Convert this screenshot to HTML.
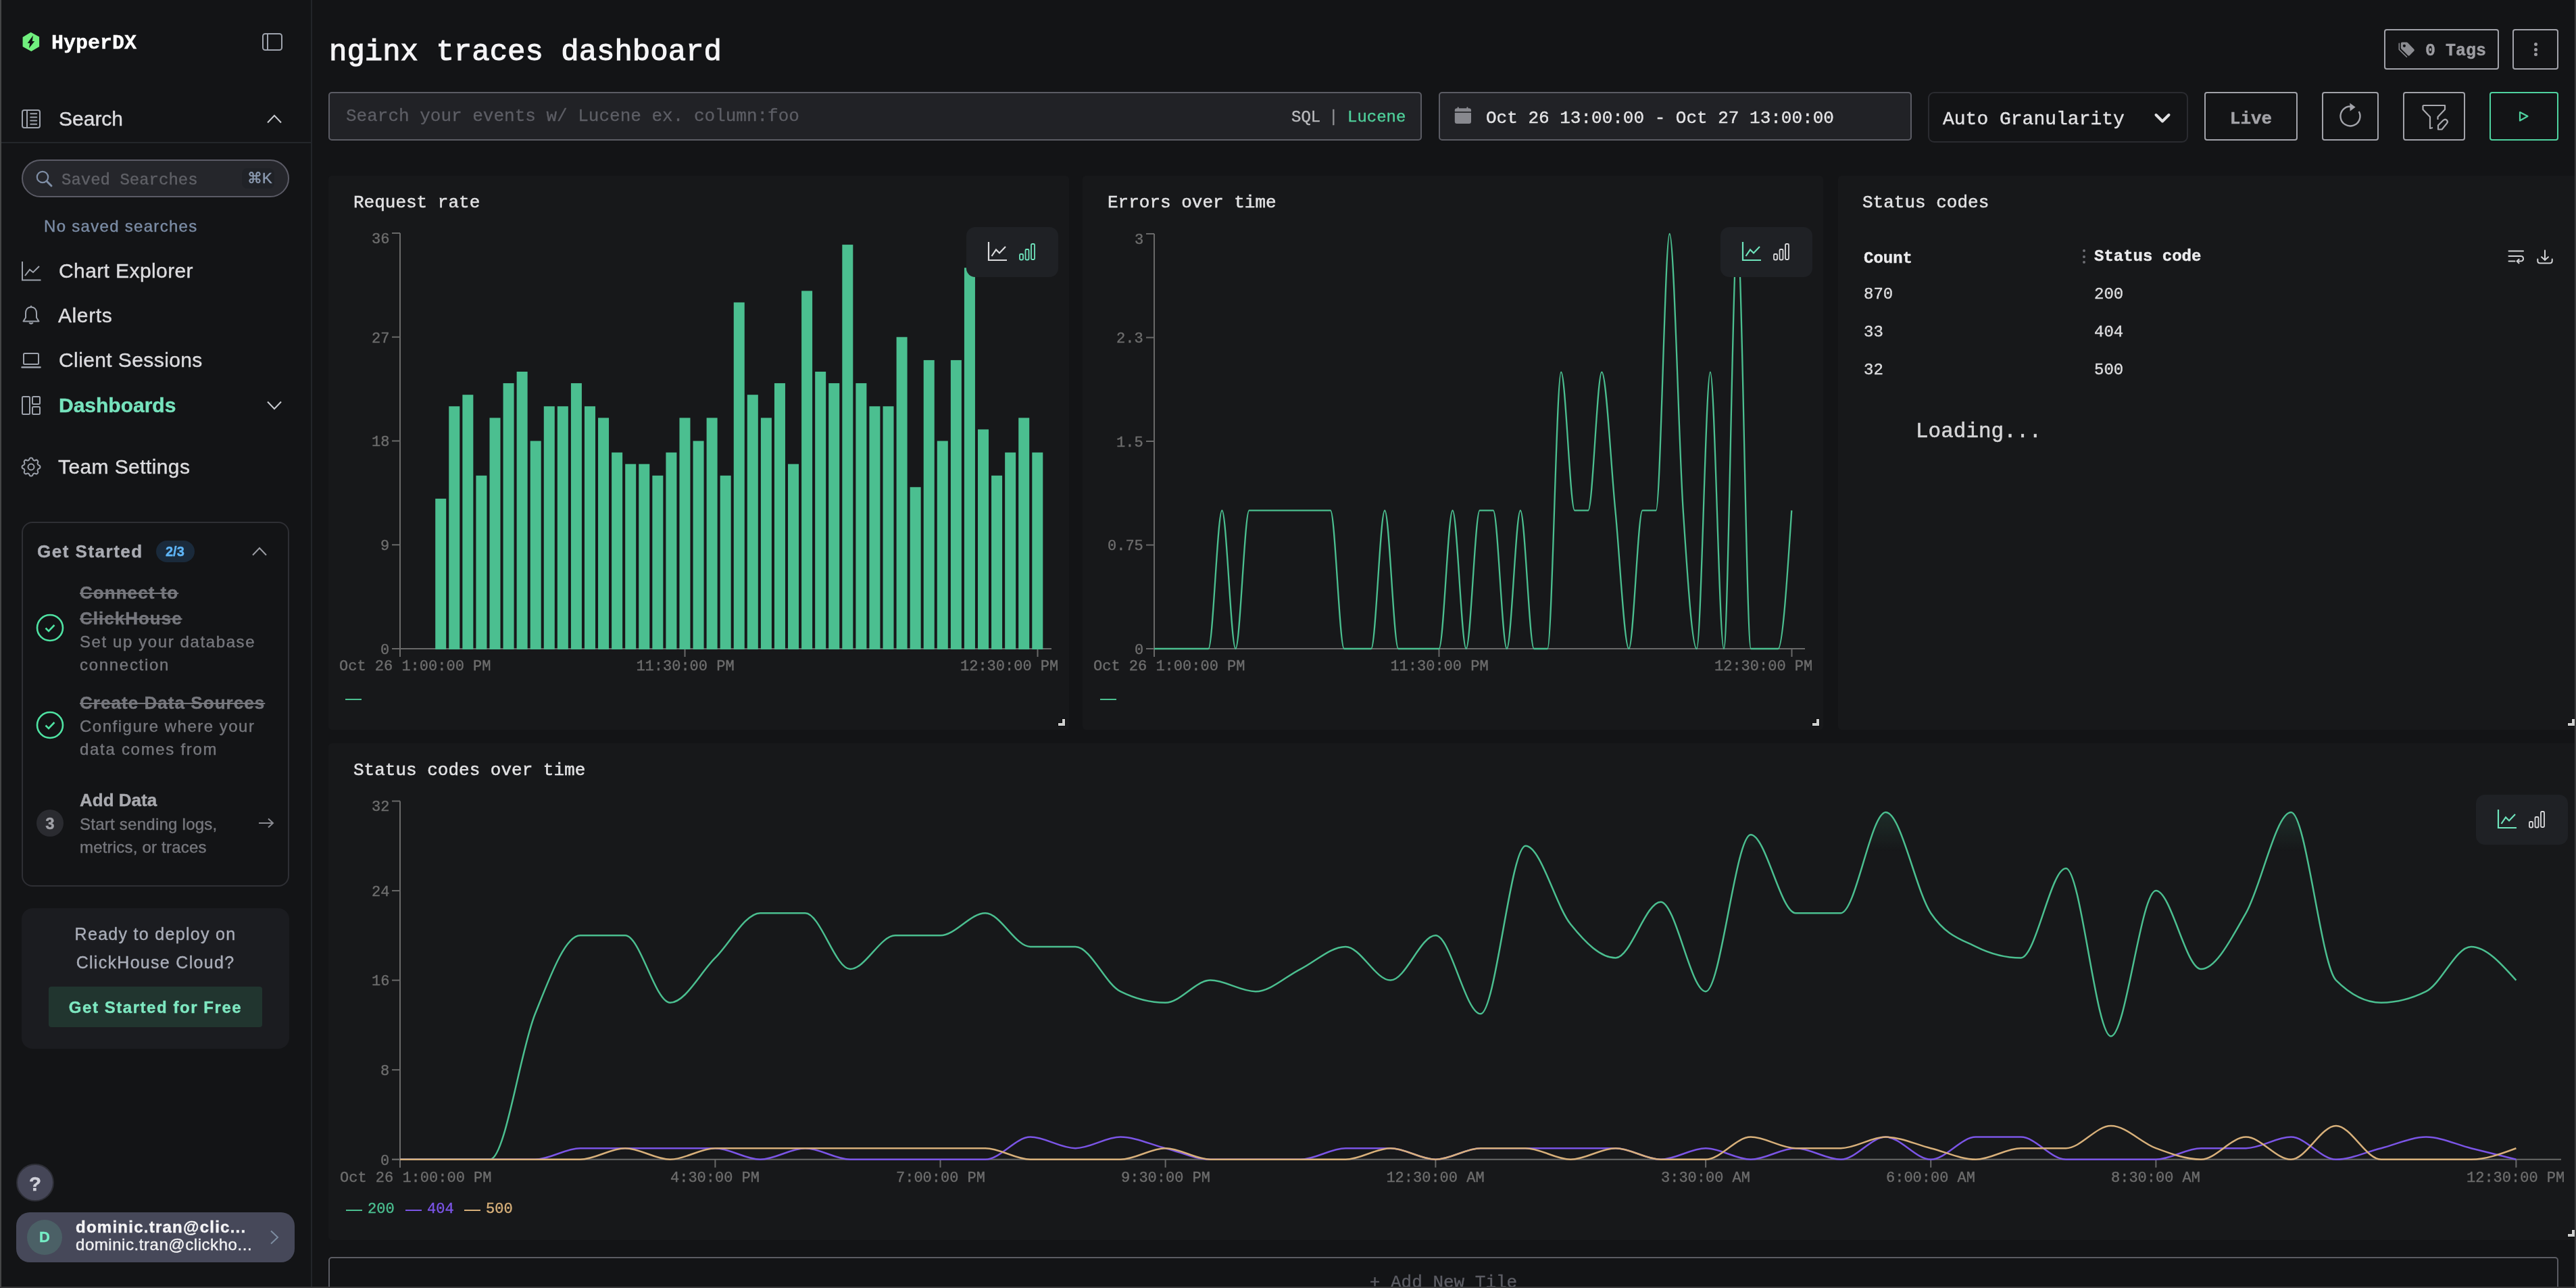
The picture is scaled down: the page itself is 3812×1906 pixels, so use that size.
<!DOCTYPE html><html><head><meta charset="utf-8"><title>nginx traces dashboard</title>
<style>
html,body{margin:0;padding:0;}
body{width:3812px;height:1906px;position:relative;overflow:hidden;background:#131416;}
.t{position:absolute;white-space:nowrap;will-change:transform;-webkit-text-stroke:0.4px;}
.a{position:absolute;box-sizing:border-box;}
svg{position:absolute;overflow:visible;}
</style></head><body>

<svg style="left:33px;top:47px" width="26" height="30" viewBox="0 0 26 30">
<path d="M12.6 0.8 L25.1 7.6 L25.1 22.1 L13.3 29.1 L0.6 22.1 L0.6 7.9 Z" fill="#70ef7e"/>
<path d="M15.9 5.6 L7.7 16.7 L11.1 16.9 L10.0 24.2 L18.2 14.1 L14.8 13.9 Z" fill="#111214"/>
</svg>
<div class="t" style="left:76px;top:49.0px;font:bold 30px/30px 'Liberation Mono', monospace;color:#ffffff;">HyperDX</div>
<svg style="left:388px;top:49px" width="30" height="26" viewBox="0 0 30 26">
<rect x="1" y="1" width="28" height="24" rx="3.5" fill="none" stroke="#9ea3ad" stroke-width="2"/>
<line x1="8" y1="1" x2="8" y2="25" stroke="#9ea3ad" stroke-width="2"/></svg>
<svg style="left:32px;top:162px" width="28" height="28" viewBox="0 0 28 28">
<rect x="1" y="1" width="26" height="26" rx="3" fill="none" stroke="#9ea3ad" stroke-width="2"/>
<line x1="8" y1="1" x2="8" y2="27" stroke="#9ea3ad" stroke-width="2"/>
<g stroke="#9ea3ad" stroke-width="2" stroke-linecap="round"><line x1="13.2" y1="6.2" x2="22.2" y2="6.2"/><line x1="13.2" y1="11.4" x2="22.2" y2="11.4"/><line x1="13.2" y1="16.6" x2="22.2" y2="16.6"/><line x1="13.2" y1="21.8" x2="22.2" y2="21.8"/></g></svg>
<div class="t" style="left:87px;top:161.1px;font:normal 30px/30px 'Liberation Sans', sans-serif;color:#dcdcdf;">Search</div>
<svg style="left:395px;top:169px" width="22" height="14" viewBox="0 0 22 14"><polyline points="1,12.5 11,2 21,12.5" fill="none" stroke="#c9cbd0" stroke-width="2"/></svg>
<div class="a" style="left:2px;top:210px;width:459px;height:2px;background:#23262a"></div>
<div class="a" style="left:32px;top:236px;width:396px;height:56px;border-radius:28px;border:2px solid #5b5b66;background:#25262b"></div>
<svg style="left:53px;top:252px" width="25" height="25" viewBox="0 0 25 25"><circle cx="10" cy="10" r="8.2" fill="none" stroke="#7f8ea6" stroke-width="2.2"/><line x1="16" y1="16" x2="23" y2="23" stroke="#7f8ea6" stroke-width="3" stroke-linecap="round"/></svg>
<div class="t" style="left:91px;top:254.6px;font:normal 24px/24px 'Liberation Mono', monospace;color:#5f6066;">Saved Searches</div>
<div class="a" style="left:358px;top:249px;width:48px;height:30px;border-radius:8px;background:#202227"></div>
<div class="t" style="left:366px;top:253.4px;font:normal 22px/22px 'Liberation Sans', sans-serif;color:#8d9cb3;">&#8984;K</div>
<div class="t" style="left:65px;top:322.7px;font:normal 24px/24px 'Liberation Sans', sans-serif;color:#7b8ca5;letter-spacing:1.3px;">No saved searches</div>
<svg style="left:32px;top:387px" width="29" height="29" viewBox="0 0 29 29"><polyline points="1,0 1,27.5 28.5,27.5" fill="none" stroke="#9ea3ad" stroke-width="2"/><polyline points="5,21 12,12 17,16 26,7" fill="none" stroke="#9ea3ad" stroke-width="2"/></svg>
<div class="t" style="left:87px;top:385.6px;font:normal 30px/30px 'Liberation Sans', sans-serif;color:#dcdcdf;letter-spacing:0.4px;">Chart Explorer</div>
<svg style="left:33px;top:452px" width="26" height="30" viewBox="0 0 26 30"><path d="M13 2.5 C7.5 2.5 5 6.5 5 11.5 L5 18 L1.5 23.5 L24.5 23.5 L21 18 L21 11.5 C21 6.5 18.5 2.5 13 2.5 Z" fill="none" stroke="#9ea3ad" stroke-width="2" stroke-linejoin="round"/><circle cx="13" cy="1.5" r="1.3" fill="#9ea3ad"/><path d="M10 25.5 Q13 29 16 25.5" fill="#9ea3ad" stroke="#9ea3ad" stroke-width="1.5"/></svg>
<div class="t" style="left:86px;top:452.1px;font:normal 30px/30px 'Liberation Sans', sans-serif;color:#dcdcdf;letter-spacing:0.6px;">Alerts</div>
<svg style="left:32px;top:522px" width="28" height="24" viewBox="0 0 28 24"><rect x="3" y="1" width="22" height="16" rx="1.5" fill="none" stroke="#9ea3ad" stroke-width="2"/><line x1="0.5" y1="21.5" x2="27.5" y2="21.5" stroke="#9ea3ad" stroke-width="2.5" stroke-linecap="round"/></svg>
<div class="t" style="left:87px;top:517.6px;font:normal 30px/30px 'Liberation Sans', sans-serif;color:#dcdcdf;letter-spacing:0.4px;">Client Sessions</div>
<svg style="left:32px;top:586px" width="28" height="28" viewBox="0 0 28 28"><rect x="1" y="1" width="11" height="26" rx="1.5" fill="none" stroke="#9ea3ad" stroke-width="2"/><rect x="16" y="1" width="11" height="11" rx="1.5" fill="none" stroke="#9ea3ad" stroke-width="2"/><rect x="16" y="16" width="11" height="11" rx="1.5" fill="none" stroke="#9ea3ad" stroke-width="2"/></svg>
<div class="t" style="left:87px;top:584.6px;font:bold 30px/30px 'Liberation Sans', sans-serif;color:#76e3bd;">Dashboards</div>
<svg style="left:395px;top:593px" width="22" height="14" viewBox="0 0 22 14"><polyline points="1,1.5 11,12 21,1.5" fill="none" stroke="#c9cbd0" stroke-width="2"/></svg>
<svg style="left:28px;top:673px" width="36" height="36" viewBox="0 0 24 24"><path d="M10.325 4.317c.426 -1.756 2.924 -1.756 3.35 0a1.724 1.724 0 0 0 2.573 1.066c1.543 -.94 3.31 .826 2.37 2.37a1.724 1.724 0 0 0 1.065 2.572c1.756 .426 1.756 2.924 0 3.35a1.724 1.724 0 0 0 -1.066 2.573c.94 1.543 -.826 3.31 -2.37 2.37a1.724 1.724 0 0 0 -2.572 1.065c-.426 1.756 -2.924 1.756 -3.35 0a1.724 1.724 0 0 0 -2.573 -1.066c-1.543 .94 -3.31 -.826 -2.37 -2.37a1.724 1.724 0 0 0 -1.065 -2.572c-1.756 -.426 -1.756 -2.924 0 -3.35a1.724 1.724 0 0 0 1.066 -2.573c-.94 -1.543 .826 -3.31 2.37 -2.37c1 .608 2.296 .07 2.572 -1.065z" fill="none" stroke="#9ea3ad" stroke-width="1.3" stroke-linejoin="round"/><circle cx="12" cy="12" r="3" fill="none" stroke="#9ea3ad" stroke-width="1.3"/></svg>
<div class="t" style="left:86px;top:675.6px;font:normal 30px/30px 'Liberation Sans', sans-serif;color:#dcdcdf;letter-spacing:0.4px;">Team Settings</div>
<div class="a" style="left:32px;top:772px;width:396px;height:540px;border-radius:16px;border:2px solid #2e2f34"></div>
<div class="t" style="left:55px;top:803.0px;font:bold 26px/26px 'Liberation Sans', sans-serif;color:#a9abb2;letter-spacing:1.5px;">Get Started</div>
<div class="a" style="left:231px;top:800px;width:57px;height:32px;border-radius:16px;background:#1a2a3b"></div>
<div class="t" style="left:245px;top:806.1px;font:bold 20px/20px 'Liberation Sans', sans-serif;color:#5eb4f5;">2/3</div>
<svg style="left:373px;top:809px" width="22" height="14" viewBox="0 0 22 14"><polyline points="1,12.5 11,2 21,12.5" fill="none" stroke="#9a9ca3" stroke-width="2"/></svg>
<svg style="left:53px;top:908px" width="42" height="42" viewBox="0 0 42 42"><circle cx="21" cy="21" r="19" fill="none" stroke="#4fe3a3" stroke-width="2.6"/><polyline points="14.5,21.5 19,26 27.5,17" fill="none" stroke="#4fe3a3" stroke-width="2.6"/></svg>
<div class="t" style="left:118px;top:864.0px;font:bold 26px/26px 'Liberation Sans', sans-serif;color:#76777d;letter-spacing:1.05px;text-decoration:line-through;">Connect to</div>
<div class="t" style="left:118px;top:902.0px;font:bold 26px/26px 'Liberation Sans', sans-serif;color:#76777d;letter-spacing:1.0px;text-decoration:line-through;">ClickHouse</div>
<div class="t" style="left:118px;top:937.7px;font:normal 24px/24px 'Liberation Sans', sans-serif;color:#76777d;letter-spacing:1.6px;">Set up your database</div>
<div class="t" style="left:118px;top:971.7px;font:normal 24px/24px 'Liberation Sans', sans-serif;color:#76777d;letter-spacing:1.7px;">connection</div>
<svg style="left:53px;top:1052px" width="42" height="42" viewBox="0 0 42 42"><circle cx="21" cy="21" r="19" fill="none" stroke="#4fe3a3" stroke-width="2.6"/><polyline points="14.5,21.5 19,26 27.5,17" fill="none" stroke="#4fe3a3" stroke-width="2.6"/></svg>
<div class="t" style="left:118px;top:1027.0px;font:bold 26px/26px 'Liberation Sans', sans-serif;color:#76777d;letter-spacing:1.05px;text-decoration:line-through;">Create Data Sources</div>
<div class="t" style="left:118px;top:1062.7px;font:normal 24px/24px 'Liberation Sans', sans-serif;color:#76777d;letter-spacing:1.5px;">Configure where your</div>
<div class="t" style="left:118px;top:1096.7px;font:normal 24px/24px 'Liberation Sans', sans-serif;color:#76777d;letter-spacing:1.7px;">data comes from</div>
<div class="a" style="left:54px;top:1198px;width:40px;height:40px;border-radius:20px;background:#2a2b30"></div>
<div class="t" style="left:74px;transform:translateX(-50%);top:1206.7px;font:bold 24px/24px 'Liberation Sans', sans-serif;color:#a0a1a7;">3</div>
<div class="t" style="left:118px;top:1171.0px;font:bold 26px/26px 'Liberation Sans', sans-serif;color:#a8a9ae;">Add Data</div>
<div class="t" style="left:118px;top:1207.7px;font:normal 24px/24px 'Liberation Sans', sans-serif;color:#76777d;letter-spacing:0.25px;">Start sending logs,</div>
<div class="t" style="left:118px;top:1241.7px;font:normal 24px/24px 'Liberation Sans', sans-serif;color:#76777d;letter-spacing:0.2px;">metrics, or traces</div>
<svg style="left:382px;top:1210px" width="24" height="16" viewBox="0 0 24 16"><line x1="1" y1="8" x2="22" y2="8" stroke="#8a8b91" stroke-width="2"/><polyline points="15,1.5 22,8 15,14.5" fill="none" stroke="#8a8b91" stroke-width="2"/></svg>
<div class="a" style="left:32px;top:1344px;width:396px;height:208px;border-radius:16px;background:#1b1c20"></div>
<div class="t" style="left:230px;transform:translateX(-50%);top:1369.8px;font:normal 25px/25px 'Liberation Sans', sans-serif;color:#a9adb8;letter-spacing:1.3px;">Ready to deploy on</div>
<div class="t" style="left:230px;transform:translateX(-50%);top:1411.8px;font:normal 25px/25px 'Liberation Sans', sans-serif;color:#a9adb8;letter-spacing:1.3px;">ClickHouse Cloud?</div>
<div class="a" style="left:72px;top:1460px;width:316px;height:60px;border-radius:4px;background:#21352f"></div>
<div class="t" style="left:230px;transform:translateX(-50%);top:1478.7px;font:bold 24px/24px 'Liberation Sans', sans-serif;color:#7ee8c1;letter-spacing:1.55px;">Get Started for Free</div>
<div class="a" style="left:24px;top:1722px;width:56px;height:56px;border-radius:28px;background:#454657;border:2px solid #2d2e36"></div>
<div class="t" style="left:52px;transform:translateX(-50%);top:1736.6px;font:bold 30px/30px 'Liberation Sans', sans-serif;color:#d0d1da;">?</div>
<div class="a" style="left:24px;top:1794px;width:412px;height:74px;border-radius:20px;background:#464859"></div>
<div class="a" style="left:40px;top:1805px;width:52px;height:52px;border-radius:26px;background:#4b6066"></div>
<div class="t" style="left:66px;transform:translateX(-50%);top:1819.9px;font:bold 22px/22px 'Liberation Sans', sans-serif;color:#76eec6;">D</div>
<div class="t" style="left:112px;top:1803.7px;font:bold 24px/24px 'Liberation Sans', sans-serif;color:#f4f4f6;letter-spacing:1.25px;">dominic.tran@clic...</div>
<div class="t" style="left:112px;top:1830.2px;font:normal 24px/24px 'Liberation Sans', sans-serif;color:#f0f0f2;letter-spacing:0.55px;">dominic.tran@clickho...</div>
<svg style="left:399px;top:1820px" width="14" height="22" viewBox="0 0 14 22"><polyline points="2,1.5 12,11 2,20.5" fill="none" stroke="#7d8da1" stroke-width="2"/></svg>
<div class="a" style="left:460px;top:0;width:2px;height:1906px;background:#222529"></div>
<div class="t" style="left:487px;top:55.3px;font:normal 44px/44px 'Liberation Mono', monospace;color:#f5f5f7;-webkit-text-stroke:1.1px #f5f5f7;">nginx traces dashboard</div>
<div class="a" style="left:3528px;top:43px;width:170px;height:60px;border-radius:4px;border:2px solid #a2a3aa"></div>
<svg style="left:3549px;top:61px" width="26" height="25" viewBox="0 0 26 25"><path d="M5.8 1.5 L12.2 1.5 Q13.2 1.5 14 2.3 L23.2 11.8 Q24.4 13.2 23.2 14.5 L16.8 21 Q15.5 22.2 14.2 21 L4.6 11.4 Q3.8 10.6 3.8 9.4 L3.8 3.5 Q3.8 1.5 5.8 1.5 Z" fill="#8b8c91"/><circle cx="8.9" cy="6.8" r="2.1" fill="#111214"/><polyline points="1.3,3.2 1.3,12.3 12.5,23.3" fill="none" stroke="#8b8c91" stroke-width="1.5" stroke-linecap="round" stroke-linejoin="round"/></svg>
<div class="t" style="left:3589px;top:63.3px;font:bold 25px/25px 'Liberation Mono', monospace;color:#9d9da2;">0 Tags</div>
<div class="a" style="left:3718px;top:43px;width:68px;height:60px;border-radius:4px;border:2px solid #a2a3aa"></div>
<div class="a" style="left:3749.5px;top:63.0px;width:5px;height:5px;border-radius:3px;background:#9a9a9f"></div>
<div class="a" style="left:3749.5px;top:70.5px;width:5px;height:5px;border-radius:3px;background:#9a9a9f"></div>
<div class="a" style="left:3749.5px;top:78.0px;width:5px;height:5px;border-radius:3px;background:#9a9a9f"></div>
<div class="a" style="left:486px;top:136px;width:1618px;height:72px;border-radius:5px;border:2px solid #5b5c64;background:#212226"></div>
<div class="t" style="left:512px;top:158.6px;font:normal 26px/26px 'Liberation Mono', monospace;color:#5d5e65;-webkit-text-stroke:0.3px #5d5e65;">Search your events w/ Lucene ex. column:foo</div>
<div class="t" style="left:1911px;top:162.1px;font:normal 24px/24px 'Liberation Mono', monospace;color:#b9babd;">SQL</div>
<div class="t" style="left:1966px;top:162.1px;font:normal 24px/24px 'Liberation Mono', monospace;color:#8d8e92;">|</div>
<div class="t" style="left:1994px;top:162.1px;font:normal 24px/24px 'Liberation Mono', monospace;color:#4fcf9a;">Lucene</div>
<div class="a" style="left:2129px;top:136px;width:700px;height:72px;border-radius:5px;border:2px solid #5b5c64;background:#212226"></div>
<svg style="left:2152px;top:158px" width="26" height="27" viewBox="0 0 26 27"><rect x="0.8" y="2.2" width="24.2" height="22.8" rx="3" fill="#88898f"/><rect x="4.7" y="0.3" width="2" height="4" rx="1" fill="#88898f"/><rect x="18.4" y="0.3" width="2" height="4" rx="1" fill="#88898f"/><rect x="0" y="7.2" width="26" height="1.6" fill="#1f2024"/></svg>
<div class="t" style="left:2199px;top:161.6px;font:normal 26px/26px 'Liberation Mono', monospace;color:#e4e4e6;-webkit-text-stroke:0.4px #e4e4e6;">Oct 26 13:00:00 - Oct 27 13:00:00</div>
<div class="a" style="left:2853px;top:136px;width:385px;height:75px;border-radius:9px;border:2px solid #2a2b30"></div>
<div class="t" style="left:2875px;top:163.0px;font:normal 28px/28px 'Liberation Mono', monospace;color:#e2e2e4;-webkit-text-stroke:0.4px #e2e2e4;">Auto Granularity</div>
<svg style="left:3188px;top:167px" width="24" height="16" viewBox="0 0 24 16"><polyline points="2.5,3 12,12.5 21.5,3" fill="none" stroke="#e2e2e4" stroke-width="4" stroke-linecap="round" stroke-linejoin="round"/></svg>
<div class="a" style="left:3262px;top:136px;width:138px;height:72px;border-radius:4px;border:2px solid #a2a3aa"></div>
<div class="t" style="left:3331px;transform:translateX(-50%);top:162.6px;font:bold 26px/26px 'Liberation Mono', monospace;color:#a3a3a8;">Live</div>
<div class="a" style="left:3436px;top:136px;width:84px;height:72px;border-radius:4px;border:2px solid #a2a3aa"></div>
<svg style="left:3458px;top:150px" width="40" height="40" viewBox="0 0 40 40"><path d="M32.68 14.97 A14.5 14.5 0 1 1 20.5 7.5" fill="none" stroke="#a3a4ab" stroke-width="2.4"/><path d="M19.4 2.4 L27.6 8.4 L19.6 14.4 Z" fill="#a3a4ab"/></svg>
<div class="a" style="left:3556px;top:136px;width:92px;height:72px;border-radius:4px;border:2px solid #a2a3aa"></div>
<svg style="left:3582px;top:153px" width="44" height="42" viewBox="0 0 44 42"><path d="M3.5 3 L36 3 L36 9 L25.5 20 L25.5 24" fill="none" stroke="#a9a9ae" stroke-width="2.2" stroke-linejoin="round"/><path d="M3.5 3 L3.5 9 L14 20 L14 37 L18 36" fill="none" stroke="#a9a9ae" stroke-width="2.2" stroke-linejoin="round"/><path d="M26 38.5 L26 32.5 L33.5 25 Q36.5 22.5 39 25 Q41 27.5 38.5 30 L31.5 38.5 Z" fill="none" stroke="#a9a9ae" stroke-width="2.2" stroke-linejoin="round"/></svg>
<div class="a" style="left:3684px;top:136px;width:102px;height:72px;border-radius:4px;border:2px solid #4fd3a0"></div>
<svg style="left:3726px;top:163px" width="18" height="18" viewBox="0 0 18 18"><path d="M3 3 L14.5 9 L3 15.5 Z" fill="none" stroke="#4fd3a0" stroke-width="2.2" stroke-linejoin="round"/></svg>
<div class="a" style="left:486px;top:260px;width:1096px;height:820px;border-radius:5px;background:#17181a"></div>
<div class="t" style="left:523px;top:287.1px;font:normal 26px/26px 'Liberation Mono', monospace;color:#e2e2e4;-webkit-text-stroke:0.5px #e2e2e4;">Request rate</div>
<svg style="left:0;top:0" width="3812" height="1906"><g stroke="#696969" stroke-width="2" fill="none"><line x1="592" y1="345" x2="592" y2="972"/><line x1="580" y1="960" x2="592" y2="960"/><line x1="580" y1="806.25" x2="592" y2="806.25"/><line x1="580" y1="652.5" x2="592" y2="652.5"/><line x1="580" y1="498.75" x2="592" y2="498.75"/><line x1="580" y1="345" x2="592" y2="345"/></g></svg>
<div class="t" style="right:3236px;top:951.8px;font:normal 22px/22px 'Liberation Mono', monospace;color:#6d6d6d;">0</div>
<div class="t" style="right:3236px;top:798.1px;font:normal 22px/22px 'Liberation Mono', monospace;color:#6d6d6d;">9</div>
<div class="t" style="right:3236px;top:644.3px;font:normal 22px/22px 'Liberation Mono', monospace;color:#6d6d6d;">18</div>
<div class="t" style="right:3236px;top:490.6px;font:normal 22px/22px 'Liberation Mono', monospace;color:#6d6d6d;">27</div>
<div class="t" style="right:3236px;top:343.6px;font:normal 22px/22px 'Liberation Mono', monospace;color:#6d6d6d;">36</div>
<svg style="left:0;top:0" width="3812" height="1906"><g stroke="#696969" stroke-width="2" fill="none"><line x1="580" y1="960" x2="1556" y2="960"/><line x1="592" y1="960" x2="592" y2="972"/><line x1="1013.5" y1="960" x2="1013.5" y2="972"/><line x1="1535.5" y1="960" x2="1535.5" y2="972"/></g></svg>
<svg style="left:0;top:0" width="3812" height="1906"><g fill="#4bbf90"><rect x="644.21" y="737.92" width="16" height="223.08"/><rect x="664.28" y="601.25" width="16" height="359.75"/><rect x="684.35" y="584.17" width="16" height="376.83"/><rect x="704.42" y="703.75" width="16" height="257.25"/><rect x="724.49" y="618.33" width="16" height="342.67"/><rect x="744.56" y="567.08" width="16" height="393.92"/><rect x="764.63" y="550.00" width="16" height="411.00"/><rect x="784.70" y="652.50" width="16" height="308.50"/><rect x="804.77" y="601.25" width="16" height="359.75"/><rect x="824.84" y="601.25" width="16" height="359.75"/><rect x="844.91" y="567.08" width="16" height="393.92"/><rect x="864.98" y="601.25" width="16" height="359.75"/><rect x="885.05" y="618.33" width="16" height="342.67"/><rect x="905.12" y="669.58" width="16" height="291.42"/><rect x="925.19" y="686.67" width="16" height="274.33"/><rect x="945.26" y="686.67" width="16" height="274.33"/><rect x="965.33" y="703.75" width="16" height="257.25"/><rect x="985.40" y="669.58" width="16" height="291.42"/><rect x="1005.47" y="618.33" width="16" height="342.67"/><rect x="1025.54" y="652.50" width="16" height="308.50"/><rect x="1045.61" y="618.33" width="16" height="342.67"/><rect x="1065.68" y="703.75" width="16" height="257.25"/><rect x="1085.75" y="447.50" width="16" height="513.50"/><rect x="1105.82" y="584.17" width="16" height="376.83"/><rect x="1125.89" y="618.33" width="16" height="342.67"/><rect x="1145.96" y="567.08" width="16" height="393.92"/><rect x="1166.03" y="686.67" width="16" height="274.33"/><rect x="1186.10" y="430.42" width="16" height="530.58"/><rect x="1206.17" y="550.00" width="16" height="411.00"/><rect x="1226.24" y="567.08" width="16" height="393.92"/><rect x="1246.31" y="362.08" width="16" height="598.92"/><rect x="1266.38" y="567.08" width="16" height="393.92"/><rect x="1286.45" y="601.25" width="16" height="359.75"/><rect x="1306.52" y="601.25" width="16" height="359.75"/><rect x="1326.59" y="498.75" width="16" height="462.25"/><rect x="1346.66" y="720.83" width="16" height="240.17"/><rect x="1366.73" y="532.92" width="16" height="428.08"/><rect x="1386.80" y="652.50" width="16" height="308.50"/><rect x="1406.87" y="532.92" width="16" height="428.08"/><rect x="1426.94" y="396.25" width="16" height="564.75"/><rect x="1447.01" y="635.42" width="16" height="325.58"/><rect x="1467.08" y="703.75" width="16" height="257.25"/><rect x="1487.15" y="669.58" width="16" height="291.42"/><rect x="1507.22" y="618.33" width="16" height="342.67"/><rect x="1527.29" y="669.58" width="16" height="291.42"/></g></svg>
<div class="t" style="left:502px;top:976.1px;font:normal 22px/22px 'Liberation Mono', monospace;color:#6d6d6d;">Oct 26 1:00:00 PM</div>
<div class="t" style="left:1013.5px;transform:translateX(-50%);top:976.1px;font:normal 22px/22px 'Liberation Mono', monospace;color:#6d6d6d;">11:30:00 PM</div>
<div class="t" style="right:2246px;top:976.1px;font:normal 22px/22px 'Liberation Mono', monospace;color:#6d6d6d;">12:30:00 PM</div>
<div class="a" style="left:511px;top:1034px;width:24px;height:2px;background:#4bbf90"></div>
<div class="a" style="left:1430px;top:336px;width:136px;height:74px;border-radius:13px;background:#1f2125"></div>
<svg style="left:1460px;top:356px" width="80" height="34" viewBox="0 0 80 34">
<polyline points="3,2 3,29 30,29" fill="none" stroke="#dcdcde" stroke-width="2.2"/>
<polyline points="7.5,23 14,13.5 19,18.5 28,9" fill="none" stroke="#dcdcde" stroke-width="2.2"/>
<rect x="49" y="20" width="5" height="8.5" rx="1.5" fill="none" stroke="#6fe5bd" stroke-width="1.8"/>
<rect x="57.5" y="13" width="5" height="15.5" rx="1.5" fill="none" stroke="#6fe5bd" stroke-width="1.8"/>
<rect x="66" y="5" width="5" height="23" rx="1.5" fill="none" stroke="#6fe5bd" stroke-width="1.8"/>
</svg>
<svg style="left:1564px;top:1062px" width="14" height="14" viewBox="0 0 14 14"><path d="M8 2 L12 2 L12 12 L2 12 L2 8 L8 8 Z" fill="none" stroke="#0b0b0c" stroke-width="2" stroke-linejoin="round"/><path d="M8 2 L12 2 L12 12 L2 12 L2 8 L8 8 Z" fill="#cfd0cf"/></svg>
<div class="a" style="left:1602px;top:260px;width:1096px;height:820px;border-radius:5px;background:#17181a"></div>
<div class="t" style="left:1639px;top:287.1px;font:normal 26px/26px 'Liberation Mono', monospace;color:#e2e2e4;-webkit-text-stroke:0.5px #e2e2e4;">Errors over time</div>
<svg style="left:0;top:0" width="3812" height="1906"><g stroke="#696969" stroke-width="2" fill="none"><line x1="1708" y1="346" x2="1708" y2="972"/><line x1="1696" y1="960" x2="1708" y2="960"/><line x1="1696" y1="806.5" x2="1708" y2="806.5"/><line x1="1696" y1="653" x2="1708" y2="653"/><line x1="1696" y1="499.5" x2="1708" y2="499.5"/><line x1="1696" y1="346" x2="1708" y2="346"/></g></svg>
<div class="t" style="right:2120px;top:951.8px;font:normal 22px/22px 'Liberation Mono', monospace;color:#6d6d6d;">0</div>
<div class="t" style="right:2120px;top:798.3px;font:normal 22px/22px 'Liberation Mono', monospace;color:#6d6d6d;">0.75</div>
<div class="t" style="right:2120px;top:644.8px;font:normal 22px/22px 'Liberation Mono', monospace;color:#6d6d6d;">1.5</div>
<div class="t" style="right:2120px;top:491.3px;font:normal 22px/22px 'Liberation Mono', monospace;color:#6d6d6d;">2.3</div>
<div class="t" style="right:2120px;top:344.6px;font:normal 22px/22px 'Liberation Mono', monospace;color:#6d6d6d;">3</div>
<svg style="left:0;top:0" width="3812" height="1906"><g stroke="#696969" stroke-width="2" fill="none"><line x1="1696" y1="960" x2="2671" y2="960"/><line x1="1708" y1="960" x2="1708" y2="972"/><line x1="2129.5" y1="960" x2="2129.5" y2="972"/><line x1="2651.5" y1="960" x2="2651.5" y2="972"/></g></svg>
<svg style="left:0;top:0" width="3812" height="1906"><path d="M1708.00,960.00 C1714.69,960.00 1721.38,960.00 1728.07,960.00 C1734.76,960.00 1741.45,960.00 1748.14,960.00 C1754.83,960.00 1761.52,960.00 1768.21,960.00 C1774.90,960.00 1781.59,960.00 1788.28,960.00 C1794.97,960.00 1801.66,755.33 1808.35,755.33 C1815.04,755.33 1821.73,960.00 1828.42,960.00 C1835.11,960.00 1841.80,755.33 1848.49,755.33 C1855.18,755.33 1861.87,755.33 1868.56,755.33 C1875.25,755.33 1881.94,755.33 1888.63,755.33 C1895.32,755.33 1902.01,755.33 1908.70,755.33 C1915.39,755.33 1922.08,755.33 1928.77,755.33 C1935.46,755.33 1942.15,755.33 1948.84,755.33 C1955.53,755.33 1962.22,755.33 1968.91,755.33 C1975.60,755.33 1982.29,960.00 1988.98,960.00 C1995.67,960.00 2002.36,960.00 2009.05,960.00 C2015.74,960.00 2022.43,960.00 2029.12,960.00 C2035.81,960.00 2042.50,755.33 2049.19,755.33 C2055.88,755.33 2062.57,960.00 2069.26,960.00 C2075.95,960.00 2082.64,960.00 2089.33,960.00 C2096.02,960.00 2102.71,960.00 2109.40,960.00 C2116.09,960.00 2122.78,960.00 2129.47,960.00 C2136.16,960.00 2142.85,755.33 2149.54,755.33 C2156.23,755.33 2162.92,960.00 2169.61,960.00 C2176.30,960.00 2182.99,755.33 2189.68,755.33 C2196.37,755.33 2203.06,755.33 2209.75,755.33 C2216.44,755.33 2223.13,960.00 2229.82,960.00 C2236.51,960.00 2243.20,755.33 2249.89,755.33 C2256.58,755.33 2263.27,960.00 2269.96,960.00 C2276.65,960.00 2283.34,960.00 2290.03,960.00 C2296.72,960.00 2303.41,550.67 2310.10,550.67 C2316.79,550.67 2323.48,755.33 2330.17,755.33 C2336.86,755.33 2343.55,755.33 2350.24,755.33 C2356.93,755.33 2363.62,550.67 2370.31,550.67 C2377.00,550.67 2383.69,687.11 2390.38,755.33 C2397.07,823.56 2403.76,960.00 2410.45,960.00 C2417.14,960.00 2423.83,755.33 2430.52,755.33 C2437.21,755.33 2443.90,755.33 2450.59,755.33 C2457.28,755.33 2463.97,346.00 2470.66,346.00 C2477.35,346.00 2484.04,653.00 2490.73,755.33 C2497.42,857.67 2504.11,960.00 2510.80,960.00 C2517.49,960.00 2524.18,550.67 2530.87,550.67 C2537.56,550.67 2544.25,960.00 2550.94,960.00 C2557.63,960.00 2564.32,346.00 2571.01,346.00 C2577.70,346.00 2584.39,960.00 2591.08,960.00 C2597.77,960.00 2604.46,960.00 2611.15,960.00 C2617.84,960.00 2624.53,960.00 2631.22,960.00 C2637.91,960.00 2644.60,857.67 2651.29,755.33" fill="none" stroke="#4bbf90" stroke-width="2.3"/></svg>
<div class="t" style="left:1618px;top:976.1px;font:normal 22px/22px 'Liberation Mono', monospace;color:#6d6d6d;">Oct 26 1:00:00 PM</div>
<div class="t" style="left:2129.5px;transform:translateX(-50%);top:976.1px;font:normal 22px/22px 'Liberation Mono', monospace;color:#6d6d6d;">11:30:00 PM</div>
<div class="t" style="right:1130px;top:976.1px;font:normal 22px/22px 'Liberation Mono', monospace;color:#6d6d6d;">12:30:00 PM</div>
<div class="a" style="left:1628px;top:1034px;width:24px;height:2px;background:#4bbf90"></div>
<div class="a" style="left:2546px;top:336px;width:136px;height:74px;border-radius:13px;background:#1f2125"></div>
<svg style="left:2576px;top:356px" width="80" height="34" viewBox="0 0 80 34">
<polyline points="3,2 3,29 30,29" fill="none" stroke="#6fe5bd" stroke-width="2.2"/>
<polyline points="7.5,23 14,13.5 19,18.5 28,9" fill="none" stroke="#6fe5bd" stroke-width="2.2"/>
<rect x="49" y="20" width="5" height="8.5" rx="1.5" fill="none" stroke="#dcdcde" stroke-width="1.8"/>
<rect x="57.5" y="13" width="5" height="15.5" rx="1.5" fill="none" stroke="#dcdcde" stroke-width="1.8"/>
<rect x="66" y="5" width="5" height="23" rx="1.5" fill="none" stroke="#dcdcde" stroke-width="1.8"/>
</svg>
<svg style="left:2680px;top:1062px" width="14" height="14" viewBox="0 0 14 14"><path d="M8 2 L12 2 L12 12 L2 12 L2 8 L8 8 Z" fill="none" stroke="#0b0b0c" stroke-width="2" stroke-linejoin="round"/><path d="M8 2 L12 2 L12 12 L2 12 L2 8 L8 8 Z" fill="#cfd0cf"/></svg>
<div class="a" style="left:2720px;top:260px;width:1100px;height:820px;border-radius:5px;background:#17181a"></div>
<div class="t" style="left:2756px;top:287.1px;font:normal 26px/26px 'Liberation Mono', monospace;color:#e2e2e4;-webkit-text-stroke:0.5px #e2e2e4;">Status codes</div>
<div class="t" style="left:2758px;top:371.1px;font:bold 24px/24px 'Liberation Mono', monospace;color:#ececee;">Count</div>
<div class="a" style="left:3081.5px;top:369px;width:4px;height:4px;border-radius:2px;background:#6d6e73"></div>
<div class="a" style="left:3081.5px;top:377.5px;width:4px;height:4px;border-radius:2px;background:#6d6e73"></div>
<div class="a" style="left:3081.5px;top:386px;width:4px;height:4px;border-radius:2px;background:#6d6e73"></div>
<div class="t" style="left:3099px;top:368.1px;font:bold 24px/24px 'Liberation Mono', monospace;color:#ececee;">Status code</div>
<svg style="left:3708px;top:368px" width="74" height="26" viewBox="0 0 74 26">
<g fill="none" stroke="#d2d3d6" stroke-width="2" stroke-linecap="round" stroke-linejoin="round">
<line x1="4.5" y1="3.5" x2="26" y2="3.5"/><path d="M4.5 11 L22 11 Q26 11 26 14.8 Q26 18.6 22 18.6 L17 18.6"/><polyline points="19.6,15.8 16.6,18.6 19.6,21.4"/><line x1="4.5" y1="18.6" x2="13.5" y2="18.6"/>
<line x1="58" y1="2.5" x2="58" y2="16.8"/><polyline points="53,12.2 58,16.8 63,12.2"/><path d="M47.3 15.5 L47.3 18 Q47.3 21.5 51 21.5 L65 21.5 Q68.7 21.5 68.7 18 L68.7 15.5"/>
</g></svg>
<div class="t" style="left:2758px;top:424.1px;font:normal 24px/24px 'Liberation Mono', monospace;color:#dcdcde;">870</div>
<div class="t" style="left:3099px;top:424.1px;font:normal 24px/24px 'Liberation Mono', monospace;color:#dcdcde;">200</div>
<div class="t" style="left:2758px;top:480.1px;font:normal 24px/24px 'Liberation Mono', monospace;color:#dcdcde;">33</div>
<div class="t" style="left:3099px;top:480.1px;font:normal 24px/24px 'Liberation Mono', monospace;color:#dcdcde;">404</div>
<div class="t" style="left:2758px;top:536.1px;font:normal 24px/24px 'Liberation Mono', monospace;color:#dcdcde;">32</div>
<div class="t" style="left:3099px;top:536.1px;font:normal 24px/24px 'Liberation Mono', monospace;color:#dcdcde;">500</div>
<div class="t" style="left:2835px;top:623.2px;font:normal 31px/31px 'Liberation Mono', monospace;color:#d6d6d8;-webkit-text-stroke:0.5px #d6d6d8;">Loading...</div>
<svg style="left:3798px;top:1062px" width="14" height="14" viewBox="0 0 14 14"><path d="M8 2 L12 2 L12 12 L2 12 L2 8 L8 8 Z" fill="none" stroke="#0b0b0c" stroke-width="2" stroke-linejoin="round"/><path d="M8 2 L12 2 L12 12 L2 12 L2 8 L8 8 Z" fill="#cfd0cf"/></svg>
<div class="a" style="left:486px;top:1100px;width:3340px;height:735px;border-radius:5px;background:#17181a"></div>
<div class="t" style="left:522.5px;top:1127.1px;font:normal 26px/26px 'Liberation Mono', monospace;color:#e2e2e4;-webkit-text-stroke:0.5px #e2e2e4;">Status codes over time</div>
<svg style="left:0;top:0" width="3812" height="1906"><g stroke="#696969" stroke-width="2" fill="none"><line x1="592" y1="1185.5" x2="592" y2="1727.75"/><line x1="580" y1="1715.75" x2="592" y2="1715.75"/><line x1="580" y1="1583.2" x2="592" y2="1583.2"/><line x1="580" y1="1450.6" x2="592" y2="1450.6"/><line x1="580" y1="1318.1" x2="592" y2="1318.1"/><line x1="580" y1="1185.5" x2="592" y2="1185.5"/></g></svg>
<div class="t" style="right:3236px;top:1707.6px;font:normal 22px/22px 'Liberation Mono', monospace;color:#6d6d6d;">0</div>
<div class="t" style="right:3236px;top:1575.0px;font:normal 22px/22px 'Liberation Mono', monospace;color:#6d6d6d;">8</div>
<div class="t" style="right:3236px;top:1442.4px;font:normal 22px/22px 'Liberation Mono', monospace;color:#6d6d6d;">16</div>
<div class="t" style="right:3236px;top:1309.9px;font:normal 22px/22px 'Liberation Mono', monospace;color:#6d6d6d;">24</div>
<div class="t" style="right:3236px;top:1184.1px;font:normal 22px/22px 'Liberation Mono', monospace;color:#6d6d6d;">32</div>
<svg style="left:0;top:0" width="3812" height="1906"><g stroke="#696969" stroke-width="2" fill="none"><line x1="580" y1="1715.75" x2="3790" y2="1715.75"/><line x1="592.0" y1="1715.75" x2="592.0" y2="1727.75"/><line x1="1058.375" y1="1715.75" x2="1058.375" y2="1727.75"/><line x1="1391.5" y1="1715.75" x2="1391.5" y2="1727.75"/><line x1="1724.625" y1="1715.75" x2="1724.625" y2="1727.75"/><line x1="2124.375" y1="1715.75" x2="2124.375" y2="1727.75"/><line x1="2524.125" y1="1715.75" x2="2524.125" y2="1727.75"/><line x1="2857.25" y1="1715.75" x2="2857.25" y2="1727.75"/><line x1="3190.375" y1="1715.75" x2="3190.375" y2="1727.75"/><line x1="3723.375" y1="1715.75" x2="3723.375" y2="1727.75"/></g></svg>
<svg style="left:0;top:0" width="3812" height="1906"><defs><linearGradient id="gf" gradientUnits="userSpaceOnUse" x1="0" y1="1185" x2="0" y2="1260"><stop offset="0" stop-color="#4bbf90" stop-opacity="0.16"/><stop offset="1" stop-color="#4bbf90" stop-opacity="0"/></linearGradient></defs><path d="M592.00,1715.75 C614.21,1715.75 636.42,1715.75 658.62,1715.75 C680.83,1715.75 703.04,1715.75 725.25,1715.75 C747.46,1715.75 769.67,1555.57 791.88,1500.34 C814.08,1445.10 836.29,1384.34 858.50,1384.34 C880.71,1384.34 902.92,1384.34 925.12,1384.34 C947.33,1384.34 969.54,1483.77 991.75,1483.77 C1013.96,1483.77 1036.17,1439.58 1058.38,1417.48 C1080.58,1395.39 1102.79,1351.20 1125.00,1351.20 C1147.21,1351.20 1169.42,1351.20 1191.62,1351.20 C1213.83,1351.20 1236.04,1434.05 1258.25,1434.05 C1280.46,1434.05 1302.67,1384.34 1324.88,1384.34 C1347.08,1384.34 1369.29,1384.34 1391.50,1384.34 C1413.71,1384.34 1435.92,1351.20 1458.12,1351.20 C1480.33,1351.20 1502.54,1400.91 1524.75,1400.91 C1546.96,1400.91 1569.17,1400.91 1591.38,1400.91 C1613.58,1400.91 1635.79,1456.15 1658.00,1467.20 C1680.21,1478.24 1702.42,1483.77 1724.62,1483.77 C1746.83,1483.77 1769.04,1450.62 1791.25,1450.62 C1813.46,1450.62 1835.67,1467.20 1857.88,1467.20 C1880.08,1467.20 1902.29,1445.10 1924.50,1434.05 C1946.71,1423.01 1968.92,1400.91 1991.12,1400.91 C2013.33,1400.91 2035.54,1450.62 2057.75,1450.62 C2079.96,1450.62 2102.17,1384.34 2124.38,1384.34 C2146.58,1384.34 2168.79,1500.34 2191.00,1500.34 C2213.21,1500.34 2235.42,1251.78 2257.62,1251.78 C2279.83,1251.78 2302.04,1340.16 2324.25,1367.77 C2346.46,1395.39 2368.67,1417.48 2390.88,1417.48 C2413.08,1417.48 2435.29,1334.63 2457.50,1334.63 C2479.71,1334.63 2501.92,1467.20 2524.12,1467.20 C2546.33,1467.20 2568.54,1235.21 2590.75,1235.21 C2612.96,1235.21 2635.17,1351.20 2657.38,1351.20 C2679.58,1351.20 2701.79,1351.20 2724.00,1351.20 C2746.21,1351.20 2768.42,1202.07 2790.62,1202.07 C2812.83,1202.07 2835.04,1318.06 2857.25,1351.20 C2879.46,1384.34 2901.67,1389.87 2923.88,1400.91 C2946.08,1411.96 2968.29,1417.48 2990.50,1417.48 C3012.71,1417.48 3034.92,1284.92 3057.12,1284.92 C3079.33,1284.92 3101.54,1533.48 3123.75,1533.48 C3145.96,1533.48 3168.17,1318.06 3190.38,1318.06 C3212.58,1318.06 3234.79,1434.05 3257.00,1434.05 C3279.21,1434.05 3301.42,1389.87 3323.62,1351.20 C3345.83,1312.54 3368.04,1202.07 3390.25,1202.07 C3412.46,1202.07 3434.67,1428.53 3456.88,1450.62 C3479.08,1472.72 3501.29,1483.77 3523.50,1483.77 C3545.71,1483.77 3567.92,1478.24 3590.12,1467.20 C3612.33,1456.15 3634.54,1400.91 3656.75,1400.91 C3678.96,1400.91 3701.17,1425.77 3723.38,1450.62 L3723.38,1715.75 L592,1715.75 Z" fill="url(#gf)"/><path d="M592.00,1715.75 C614.21,1715.75 636.42,1715.75 658.62,1715.75 C680.83,1715.75 703.04,1715.75 725.25,1715.75 C747.46,1715.75 769.67,1555.57 791.88,1500.34 C814.08,1445.10 836.29,1384.34 858.50,1384.34 C880.71,1384.34 902.92,1384.34 925.12,1384.34 C947.33,1384.34 969.54,1483.77 991.75,1483.77 C1013.96,1483.77 1036.17,1439.58 1058.38,1417.48 C1080.58,1395.39 1102.79,1351.20 1125.00,1351.20 C1147.21,1351.20 1169.42,1351.20 1191.62,1351.20 C1213.83,1351.20 1236.04,1434.05 1258.25,1434.05 C1280.46,1434.05 1302.67,1384.34 1324.88,1384.34 C1347.08,1384.34 1369.29,1384.34 1391.50,1384.34 C1413.71,1384.34 1435.92,1351.20 1458.12,1351.20 C1480.33,1351.20 1502.54,1400.91 1524.75,1400.91 C1546.96,1400.91 1569.17,1400.91 1591.38,1400.91 C1613.58,1400.91 1635.79,1456.15 1658.00,1467.20 C1680.21,1478.24 1702.42,1483.77 1724.62,1483.77 C1746.83,1483.77 1769.04,1450.62 1791.25,1450.62 C1813.46,1450.62 1835.67,1467.20 1857.88,1467.20 C1880.08,1467.20 1902.29,1445.10 1924.50,1434.05 C1946.71,1423.01 1968.92,1400.91 1991.12,1400.91 C2013.33,1400.91 2035.54,1450.62 2057.75,1450.62 C2079.96,1450.62 2102.17,1384.34 2124.38,1384.34 C2146.58,1384.34 2168.79,1500.34 2191.00,1500.34 C2213.21,1500.34 2235.42,1251.78 2257.62,1251.78 C2279.83,1251.78 2302.04,1340.16 2324.25,1367.77 C2346.46,1395.39 2368.67,1417.48 2390.88,1417.48 C2413.08,1417.48 2435.29,1334.63 2457.50,1334.63 C2479.71,1334.63 2501.92,1467.20 2524.12,1467.20 C2546.33,1467.20 2568.54,1235.21 2590.75,1235.21 C2612.96,1235.21 2635.17,1351.20 2657.38,1351.20 C2679.58,1351.20 2701.79,1351.20 2724.00,1351.20 C2746.21,1351.20 2768.42,1202.07 2790.62,1202.07 C2812.83,1202.07 2835.04,1318.06 2857.25,1351.20 C2879.46,1384.34 2901.67,1389.87 2923.88,1400.91 C2946.08,1411.96 2968.29,1417.48 2990.50,1417.48 C3012.71,1417.48 3034.92,1284.92 3057.12,1284.92 C3079.33,1284.92 3101.54,1533.48 3123.75,1533.48 C3145.96,1533.48 3168.17,1318.06 3190.38,1318.06 C3212.58,1318.06 3234.79,1434.05 3257.00,1434.05 C3279.21,1434.05 3301.42,1389.87 3323.62,1351.20 C3345.83,1312.54 3368.04,1202.07 3390.25,1202.07 C3412.46,1202.07 3434.67,1428.53 3456.88,1450.62 C3479.08,1472.72 3501.29,1483.77 3523.50,1483.77 C3545.71,1483.77 3567.92,1478.24 3590.12,1467.20 C3612.33,1456.15 3634.54,1400.91 3656.75,1400.91 C3678.96,1400.91 3701.17,1425.77 3723.38,1450.62" fill="none" stroke="#4bbf90" stroke-width="2.5"/><path d="M592.00,1715.75 C614.21,1715.75 636.42,1715.75 658.62,1715.75 C680.83,1715.75 703.04,1715.75 725.25,1715.75 C747.46,1715.75 769.67,1715.75 791.88,1715.75 C814.08,1715.75 836.29,1699.18 858.50,1699.18 C880.71,1699.18 902.92,1699.18 925.12,1699.18 C947.33,1699.18 969.54,1699.18 991.75,1699.18 C1013.96,1699.18 1036.17,1699.18 1058.38,1699.18 C1080.58,1699.18 1102.79,1715.75 1125.00,1715.75 C1147.21,1715.75 1169.42,1699.18 1191.62,1699.18 C1213.83,1699.18 1236.04,1715.75 1258.25,1715.75 C1280.46,1715.75 1302.67,1715.75 1324.88,1715.75 C1347.08,1715.75 1369.29,1715.75 1391.50,1715.75 C1413.71,1715.75 1435.92,1715.75 1458.12,1715.75 C1480.33,1715.75 1502.54,1682.61 1524.75,1682.61 C1546.96,1682.61 1569.17,1699.18 1591.38,1699.18 C1613.58,1699.18 1635.79,1682.61 1658.00,1682.61 C1680.21,1682.61 1702.42,1693.66 1724.62,1699.18 C1746.83,1704.70 1769.04,1715.75 1791.25,1715.75 C1813.46,1715.75 1835.67,1715.75 1857.88,1715.75 C1880.08,1715.75 1902.29,1715.75 1924.50,1715.75 C1946.71,1715.75 1968.92,1699.18 1991.12,1699.18 C2013.33,1699.18 2035.54,1699.18 2057.75,1699.18 C2079.96,1699.18 2102.17,1715.75 2124.38,1715.75 C2146.58,1715.75 2168.79,1699.18 2191.00,1699.18 C2213.21,1699.18 2235.42,1699.18 2257.62,1699.18 C2279.83,1699.18 2302.04,1699.18 2324.25,1699.18 C2346.46,1699.18 2368.67,1699.18 2390.88,1699.18 C2413.08,1699.18 2435.29,1715.75 2457.50,1715.75 C2479.71,1715.75 2501.92,1699.18 2524.12,1699.18 C2546.33,1699.18 2568.54,1715.75 2590.75,1715.75 C2612.96,1715.75 2635.17,1699.18 2657.38,1699.18 C2679.58,1699.18 2701.79,1715.75 2724.00,1715.75 C2746.21,1715.75 2768.42,1682.61 2790.62,1682.61 C2812.83,1682.61 2835.04,1715.75 2857.25,1715.75 C2879.46,1715.75 2901.67,1682.61 2923.88,1682.61 C2946.08,1682.61 2968.29,1682.61 2990.50,1682.61 C3012.71,1682.61 3034.92,1715.75 3057.12,1715.75 C3079.33,1715.75 3101.54,1715.75 3123.75,1715.75 C3145.96,1715.75 3168.17,1715.75 3190.38,1715.75 C3212.58,1715.75 3234.79,1699.18 3257.00,1699.18 C3279.21,1699.18 3301.42,1699.18 3323.62,1699.18 C3345.83,1699.18 3368.04,1682.61 3390.25,1682.61 C3412.46,1682.61 3434.67,1715.75 3456.88,1715.75 C3479.08,1715.75 3501.29,1704.70 3523.50,1699.18 C3545.71,1693.66 3567.92,1682.61 3590.12,1682.61 C3612.33,1682.61 3634.54,1693.66 3656.75,1699.18 C3678.96,1704.70 3701.17,1710.23 3723.38,1715.75" fill="none" stroke="#7b55e6" stroke-width="2.5"/><path d="M592.00,1715.75 C614.21,1715.75 636.42,1715.75 658.62,1715.75 C680.83,1715.75 703.04,1715.75 725.25,1715.75 C747.46,1715.75 769.67,1715.75 791.88,1715.75 C814.08,1715.75 836.29,1715.75 858.50,1715.75 C880.71,1715.75 902.92,1699.18 925.12,1699.18 C947.33,1699.18 969.54,1715.75 991.75,1715.75 C1013.96,1715.75 1036.17,1699.18 1058.38,1699.18 C1080.58,1699.18 1102.79,1699.18 1125.00,1699.18 C1147.21,1699.18 1169.42,1699.18 1191.62,1699.18 C1213.83,1699.18 1236.04,1699.18 1258.25,1699.18 C1280.46,1699.18 1302.67,1699.18 1324.88,1699.18 C1347.08,1699.18 1369.29,1699.18 1391.50,1699.18 C1413.71,1699.18 1435.92,1699.18 1458.12,1699.18 C1480.33,1699.18 1502.54,1715.75 1524.75,1715.75 C1546.96,1715.75 1569.17,1715.75 1591.38,1715.75 C1613.58,1715.75 1635.79,1715.75 1658.00,1715.75 C1680.21,1715.75 1702.42,1699.18 1724.62,1699.18 C1746.83,1699.18 1769.04,1715.75 1791.25,1715.75 C1813.46,1715.75 1835.67,1715.75 1857.88,1715.75 C1880.08,1715.75 1902.29,1715.75 1924.50,1715.75 C1946.71,1715.75 1968.92,1715.75 1991.12,1715.75 C2013.33,1715.75 2035.54,1699.18 2057.75,1699.18 C2079.96,1699.18 2102.17,1715.75 2124.38,1715.75 C2146.58,1715.75 2168.79,1699.18 2191.00,1699.18 C2213.21,1699.18 2235.42,1699.18 2257.62,1699.18 C2279.83,1699.18 2302.04,1715.75 2324.25,1715.75 C2346.46,1715.75 2368.67,1699.18 2390.88,1699.18 C2413.08,1699.18 2435.29,1715.75 2457.50,1715.75 C2479.71,1715.75 2501.92,1715.75 2524.12,1715.75 C2546.33,1715.75 2568.54,1682.61 2590.75,1682.61 C2612.96,1682.61 2635.17,1699.18 2657.38,1699.18 C2679.58,1699.18 2701.79,1699.18 2724.00,1699.18 C2746.21,1699.18 2768.42,1682.61 2790.62,1682.61 C2812.83,1682.61 2835.04,1693.66 2857.25,1699.18 C2879.46,1704.70 2901.67,1715.75 2923.88,1715.75 C2946.08,1715.75 2968.29,1699.18 2990.50,1699.18 C3012.71,1699.18 3034.92,1699.18 3057.12,1699.18 C3079.33,1699.18 3101.54,1666.04 3123.75,1666.04 C3145.96,1666.04 3168.17,1690.89 3190.38,1699.18 C3212.58,1707.46 3234.79,1715.75 3257.00,1715.75 C3279.21,1715.75 3301.42,1682.61 3323.62,1682.61 C3345.83,1682.61 3368.04,1715.75 3390.25,1715.75 C3412.46,1715.75 3434.67,1666.04 3456.88,1666.04 C3479.08,1666.04 3501.29,1715.75 3523.50,1715.75 C3545.71,1715.75 3567.92,1715.75 3590.12,1715.75 C3612.33,1715.75 3634.54,1715.75 3656.75,1715.75 C3678.96,1715.75 3701.17,1707.46 3723.38,1699.18" fill="none" stroke="#d8b07a" stroke-width="2.5"/></svg>
<div class="t" style="left:502.5px;top:1732.6px;font:normal 22px/22px 'Liberation Mono', monospace;color:#6d6d6d;">Oct 26 1:00:00 PM</div>
<div class="t" style="left:1058.375px;transform:translateX(-50%);top:1732.6px;font:normal 22px/22px 'Liberation Mono', monospace;color:#6d6d6d;">4:30:00 PM</div>
<div class="t" style="left:1391.5px;transform:translateX(-50%);top:1732.6px;font:normal 22px/22px 'Liberation Mono', monospace;color:#6d6d6d;">7:00:00 PM</div>
<div class="t" style="left:1724.625px;transform:translateX(-50%);top:1732.6px;font:normal 22px/22px 'Liberation Mono', monospace;color:#6d6d6d;">9:30:00 PM</div>
<div class="t" style="left:2124.375px;transform:translateX(-50%);top:1732.6px;font:normal 22px/22px 'Liberation Mono', monospace;color:#6d6d6d;">12:30:00 AM</div>
<div class="t" style="left:2524.125px;transform:translateX(-50%);top:1732.6px;font:normal 22px/22px 'Liberation Mono', monospace;color:#6d6d6d;">3:30:00 AM</div>
<div class="t" style="left:2857.25px;transform:translateX(-50%);top:1732.6px;font:normal 22px/22px 'Liberation Mono', monospace;color:#6d6d6d;">6:00:00 AM</div>
<div class="t" style="left:3190.375px;transform:translateX(-50%);top:1732.6px;font:normal 22px/22px 'Liberation Mono', monospace;color:#6d6d6d;">8:30:00 AM</div>
<div class="t" style="right:17px;top:1732.6px;font:normal 22px/22px 'Liberation Mono', monospace;color:#6d6d6d;">12:30:00 PM</div>
<div class="a" style="left:512px;top:1790px;width:24px;height:2px;background:#4bbf90"></div>
<div class="t" style="left:544px;top:1779.1px;font:normal 22px/22px 'Liberation Mono', monospace;color:#4bbf90;">200</div>
<div class="a" style="left:600px;top:1790px;width:24px;height:2px;background:#7b55e6"></div>
<div class="t" style="left:632px;top:1779.1px;font:normal 22px/22px 'Liberation Mono', monospace;color:#7b55e6;">404</div>
<div class="a" style="left:687px;top:1790px;width:24px;height:2px;background:#d8b07a"></div>
<div class="t" style="left:719px;top:1779.1px;font:normal 22px/22px 'Liberation Mono', monospace;color:#d8b07a;">500</div>
<div class="a" style="left:3664px;top:1176px;width:136px;height:74px;border-radius:13px;background:#1f2125"></div>
<svg style="left:3694px;top:1196px" width="80" height="34" viewBox="0 0 80 34">
<polyline points="3,2 3,29 30,29" fill="none" stroke="#6fe5bd" stroke-width="2.2"/>
<polyline points="7.5,23 14,13.5 19,18.5 28,9" fill="none" stroke="#6fe5bd" stroke-width="2.2"/>
<rect x="49" y="20" width="5" height="8.5" rx="1.5" fill="none" stroke="#dcdcde" stroke-width="1.8"/>
<rect x="57.5" y="13" width="5" height="15.5" rx="1.5" fill="none" stroke="#dcdcde" stroke-width="1.8"/>
<rect x="66" y="5" width="5" height="23" rx="1.5" fill="none" stroke="#dcdcde" stroke-width="1.8"/>
</svg>
<svg style="left:3798px;top:1818px" width="14" height="14" viewBox="0 0 14 14"><path d="M8 2 L12 2 L12 12 L2 12 L2 8 L8 8 Z" fill="none" stroke="#0b0b0c" stroke-width="2" stroke-linejoin="round"/><path d="M8 2 L12 2 L12 12 L2 12 L2 8 L8 8 Z" fill="#cfd0cf"/></svg>
<div class="a" style="left:486px;top:1860px;width:3300px;height:80px;border-radius:5px;border:2px solid #5b5c63"></div>
<div class="t" style="left:2136px;transform:translateX(-50%);top:1885.1px;font:normal 26px/26px 'Liberation Mono', monospace;color:#5c5d64;">+ Add New Tile</div>
<div class="a" style="left:0;top:0;width:2px;height:1906px;background:#454647"></div>
<div class="a" style="left:3810px;top:0;width:2px;height:1906px;background:#3a3a3b"></div>
<div class="a" style="left:0;top:1904px;width:3812px;height:2px;background:#383839"></div>
</body></html>
